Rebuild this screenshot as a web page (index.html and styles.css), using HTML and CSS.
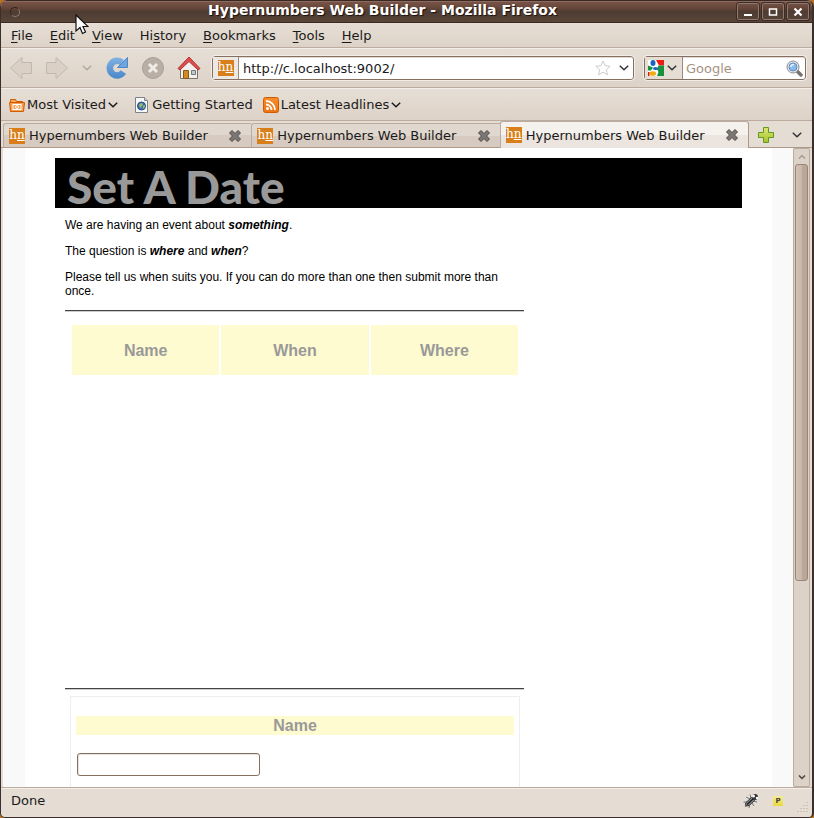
FILE: index.html
```html
<!DOCTYPE html>
<html lang="en">
<head>
<meta charset="utf-8">
<title>Hypernumbers Web Builder - Mozilla Firefox</title>
<link rel="stylesheet" href="styles.css">
</head>
<body>
<svg class="defs" aria-hidden="true">
  <defs>
    <linearGradient id="blue" x1="0" y1="0" x2="0" y2="24" gradientUnits="userSpaceOnUse"><stop offset="0" stop-color="#85b4e4"/><stop offset="1" stop-color="#4585c8"/></linearGradient>
    <linearGradient id="orange" x1="0" y1="0" x2="0" y2="1"><stop offset="0" stop-color="#f98c2c"/><stop offset="1" stop-color="#ee7410"/></linearGradient>
    <linearGradient id="green" x1="0" y1="0" x2="0" y2="1"><stop offset="0" stop-color="#dde873"/><stop offset="1" stop-color="#a3c02e"/></linearGradient>
    <symbol id="chevron" viewBox="0 0 10 6"><path d="M.8 .8L5 4.800 9.200.8" fill="none" stroke="currentColor" stroke-width="1.500"/></symbol>
    <symbol id="cross" viewBox="0 0 14 14"><path d="M4 1.5l3 3 3-3L12.500 4l-3 3 3 3-2.500 2.500-3-3-3 3L1.500 10l3-3-3-3z" fill="#7a7775" stroke="#4b4946" stroke-linejoin="round"/></symbol>
  </defs>
</svg>
<div class="window">
  <header class="titlebar">
    <button class="window-menu" type="button" aria-label="Window menu"></button>
    <div class="window-title">Hypernumbers Web Builder - Mozilla Firefox</div>
    <div class="window-buttons">
      <button type="button" aria-label="Minimize"><svg width="10" height="10"><path d="M1 7h8v2H1z" fill="#fff"/></svg></button>
      <button type="button" aria-label="Maximize"><svg width="10" height="10"><path d="M1.500 2h7v6h-7z" fill="none" stroke="#fff" stroke-width="1.500"/></svg></button>
      <button type="button" aria-label="Close"><svg width="10" height="10"><path d="M1.500 1.500l7 7M8.500 1.500l-7 7" stroke="#fff" stroke-width="2.200"/></svg></button>
    </div>
  </header>

  <nav class="menubar" aria-label="Menu bar">
    <button type="button"><u>F</u>ile</button>
    <button type="button"><u>E</u>dit</button>
    <button type="button"><u>V</u>iew</button>
    <button type="button">Hi<u>s</u>tory</button>
    <button type="button"><u>B</u>ookmarks</button>
    <button type="button"><u>T</u>ools</button>
    <button type="button"><u>H</u>elp</button>
  </nav>

  <div class="toolbar">
    <div class="nav-buttons">
      <button type="button" aria-label="Back" disabled><svg width="24" height="24"><path d="M1.500 12L13 1.500v5h9.500v11H13v5z" fill="#dad0c6" stroke="#c3b8ac" stroke-linejoin="round"/></svg></button>
      <button type="button" aria-label="Forward" disabled><svg width="24" height="24"><path d="M22.500 12L11 1.500v5H1.500v11H11v5z" fill="#dad0c6" stroke="#c3b8ac" stroke-linejoin="round"/></svg></button>
      <button type="button" class="history" aria-label="Recent pages" disabled><svg width="10" height="6"><use href="#chevron"/></svg></button>
      <button type="button" aria-label="Reload"><svg width="24" height="24"><path d="M16.800 6.500A7.300 7.300 0 1 0 18.300 16" fill="none" stroke="url(#blue)" stroke-width="6.500"/><path d="M22.500 1.500V11.500H12.500z" fill="#6ea5dc" stroke="#4a88cb" stroke-linejoin="round"/></svg></button>
      <button type="button" aria-label="Stop" disabled><svg width="24" height="24"><circle cx="12" cy="12" r="10.500" fill="#b9afa7" stroke="#aaa098"/><path d="M8 8l8 8M16 8l-8 8" stroke="#f0ebe6" stroke-width="3"/></svg></button>
      <button type="button" aria-label="Home"><svg width="24" height="24"><path d="M3.500 11L12 4l8.500 7v11.500h-17z" fill="#f2f1ef" stroke="#77726c"/><path d="M6.500 14.500h5v8h-5z" fill="#d08b20" stroke="#855a14"/><path d="M14.500 14.500h4v4h-4z" fill="#bccbd9" stroke="#777"/><path d="M1 12.500L12 1l11 11.500-2 1.500-9-8.500L3 14z" fill="#d95050" stroke="#b83030" stroke-linejoin="round"/></svg></button>
    </div>
    <form class="address">
      <span class="identity"><span class="hn">h<u>n</u></span></span>
      <input type="text" aria-label="Address" value="http://c.localhost:9002/">
      <button type="button" class="star" aria-label="Bookmark this page"><svg width="16" height="16"><path d="M8 1l2.100 4.700 5 .6-3.700 3.400 1 5.100L8 12.200l-4.400 2.600 1-5.100L.900 6.300l5-.6z" fill="#fff" stroke="#ccc"/></svg></button>
      <button type="button" aria-label="Address history"><svg width="10" height="6"><use href="#chevron"/></svg></button>
    </form>
    <form class="search">
      <button type="button" class="engine" aria-label="Search engine">
        <svg width="16" height="16"><path fill="#fff" d="M0 0h16v16H0z"/><path d="M8 0h8v5.500h-5z" fill="#ed1c12"/><path d="M10.500 5.500H16V16H9l1.500-4-1.500-3z" fill="#16923e"/><path d="M0 5.500l5 2-2 3H0z" fill="#16923e"/><path d="M0 12h1.500v4H0z" fill="#e01010"/><ellipse cx="5" cy="3" rx="2.500" ry="3" fill="#1764c2"/><ellipse cx="7.500" cy="8.500" rx="2.500" ry="1.500" fill="#1764c2"/><ellipse cx="4.800" cy="13.500" rx="3.300" ry="2.300" fill="#f0ac13"/></svg>
        <svg width="10" height="6"><use href="#chevron"/></svg>
      </button>
      <input type="text" aria-label="Search" placeholder="Google">
      <button type="submit" aria-label="Go"><svg width="17" height="17"><path d="M11 11l4 4" stroke="#77736f" stroke-width="3.500" stroke-linecap="round"/><circle cx="7" cy="7" r="6" fill="#e5e7e9" stroke="#8c8c8c"/><circle cx="7" cy="7" r="4" fill="#8cb9eb" stroke="#5f8fc4"/><path d="M4.500 7Q5 4.500 8 4.500" fill="none" stroke="#e2f0ff" stroke-width="1.500"/></svg></button>
    </form>
  </div>

  <nav class="bookmarks" aria-label="Bookmarks">
    <button type="button" class="visited"><svg width="16" height="16"><path d="M1.500 13V2.500h5l1 2h6V7" fill="#f9a65a" stroke="#ce5c00"/><path d="M.500 5.500h15l-1 9h-13z" fill="#f8a155" stroke="#ce5c00"/><rect x="4" y="7.500" width="8" height="5" fill="none" stroke="#fff"/><circle cx="8" cy="10" r="1.500" fill="none" stroke="#fff"/></svg>Most Visited<svg width="10" height="6"><use href="#chevron"/></svg></button>
    <a href="#"><svg width="16" height="16"><path d="M1.500.5h9l3 3v12h-12z" fill="#f7f8f8" stroke="#7c8488"/><path d="M10.500.5v3h3" fill="#ddd" stroke="#7c8488"/><circle cx="7.500" cy="9" r="4" fill="#466fae" stroke="#274b80"/><path d="M5 8l2-2 2 1-1 2-2 2zM9 9l2-1v2l-2 2z" fill="#9abf65"/></svg>Getting Started</a>
    <button type="button"><svg width="16" height="16"><rect x=".5" y=".5" width="15" height="15" rx="2" fill="url(#orange)" stroke="#ce5c00"/><circle cx="4.500" cy="11.500" r="1.500" fill="#fff"/><path d="M3 7.500a5.500 5.500 0 0 1 5.500 5.500M3 4a9 9 0 0 1 9 9" fill="none" stroke="#fff" stroke-width="1.800"/></svg>Latest Headlines<svg width="10" height="6"><use href="#chevron"/></svg></button>
  </nav>

  <div class="tabstrip">
    <div class="tab"><span class="hn">h<u>n</u></span><span class="tab-label">Hypernumbers Web Builder</span><button type="button" aria-label="Close tab"><svg width="14" height="14"><use href="#cross"/></svg></button></div>
    <div class="tab"><span class="hn">h<u>n</u></span><span class="tab-label">Hypernumbers Web Builder</span><button type="button" aria-label="Close tab"><svg width="14" height="14"><use href="#cross"/></svg></button></div>
    <div class="tab active"><span class="hn">h<u>n</u></span><span class="tab-label">Hypernumbers Web Builder</span><button type="button" aria-label="Close tab"><svg width="14" height="14"><use href="#cross"/></svg></button></div>
    <div class="tab-tools">
      <button type="button" aria-label="New tab"><svg width="16" height="16"><path d="M5.500.5h5v5h5v5h-5v5h-5v-5h-5v-5h5z" fill="url(#green)" stroke="#5f9a1c"/></svg></button>
      <button type="button" aria-label="List all tabs"><svg width="10" height="6"><use href="#chevron"/></svg></button>
    </div>
  </div>

  <div class="viewport">
    <div class="canvas">
      <main class="page">
        <h1>Set A Date</h1>
        <div class="column">
          <p>We are having an event about <strong>something</strong>.</p>
          <p>The question is <strong>where</strong> and <strong>when</strong>?</p>
          <p>Please tell us when suits you. If you can do more than one then submit more than once.</p>
          <hr>
          <div class="replies">
            <table>
              <thead><tr><th>Name</th><th>When</th><th>Where</th></tr></thead>
            </table>
          </div>
          <hr>
          <form class="entry">
            <label for="name">Name</label>
            <input id="name" type="text">
          </form>
        </div>
      </main>
    </div>
    <div class="scrollbar">
      <button type="button" class="up" aria-label="Scroll up"><svg width="8" height="5"><path d="M1 4.500l3-3 3 3" fill="none" stroke="#a99b90" stroke-width="1.500"/></svg></button>
      <div class="track"><div class="thumb"></div></div>
      <button type="button" aria-label="Scroll down"><svg width="8" height="5"><path d="M1 .5l3 3 3-3" fill="none" stroke="#4a443c" stroke-width="1.500"/></svg></button>
    </div>
  </div>

  <footer class="statusbar">
    <span class="status">Done</span>
    <svg width="16" height="16"><path d="M3 4l4 2M7 1.500l1 4M.5 9l4 0M6 15l1-4M11 13l-2-3M14 9l-4-1M2 14l2-3" stroke="#777" fill="none"/><path d="M3 13l-.5-3L8.500 4.500l3 3-5.500 5z" fill="#8a9095" stroke="#333"/><path d="M4 11.500l6-5.500" stroke="#1c1c1c" stroke-width="1.500"/><circle cx="12" cy="4" r="3" fill="#333"/><circle cx="10.500" cy="3" r="1.500" fill="#fff"/><circle cx="14" cy="5" r="1.200" fill="#fff"/></svg>
    <span class="badge">P</span>
    <svg class="grip" width="12" height="12"><path d="M10 1v1M7 4v1M10 4v1M4 7v1M7 7v1M10 7v1M1 10v1M4 10v1M7 10v1M10 10v1" stroke="#b5a697" stroke-width="1"/></svg>
  </footer>
</div>
<svg class="pointer" width="14" height="22" aria-hidden="true"><path d="M1 1v16l4-3.500 2.500 6 3-1.500-2.500-5.500h5z" fill="#fff" stroke="#111" stroke-width="1.200"/></svg>
</body>
</html>
```
FILE: styles.css
```css
* { box-sizing: border-box; }
body {
  margin: 0;
  background: #b9701f;
  font-family: "DejaVu Sans", sans-serif;
  font-size: 13px;
  color: #1a1a1a;
}
button, input { font: inherit; color: inherit; margin: 0; }
button { padding: 0; border: 0; background: none; }
svg { flex: none; display: block; }
.defs { position: absolute; width: 0; height: 0; }

.window {
  display: flex;
  flex-direction: column;
  height: 100vh;
  overflow: hidden;
  border: 1px solid #3a2f2a;
  border-right-width: 2px;
  border-top: 0;
  border-radius: 7px 7px 5px 5px;
  background: #e5dcd3;
}

.titlebar {
  display: flex;
  align-items: center;
  flex: none;
  height: 23px;
  padding: 0 3px 0 9px;
  border-top: 1px solid #3a2822;
  border-bottom: 1px solid #3a2a22;
  background: linear-gradient(#7a5649, #664539 35%, #4e3b32 50%, #594639);
  box-shadow: inset 0 1px #8c6a5e;
}
.window-menu {
  width: 10px;
  height: 10px;
  border: 1px solid #332620;
  border-right-color: #8d7b71;
  border-bottom-color: #8d7b71;
  border-radius: 50%;
}
.window-title {
  flex: 1;
  padding-right: 8px;
  padding-left: 16px;
  text-align: center;
  font-size: 14px;
  font-weight: bold;
  line-height: 19px;
  padding-bottom: 2px;
  color: #fff;
  text-shadow: 1px 1px 1px #1a0f0a;
}
.window-buttons { display: flex; gap: 3px; }
.window-buttons button {
  display: grid;
  place-items: center;
  width: 22px;
  height: 17px;
  border: 1px solid #8e7a70;
  outline: 1px solid #3b2b24;
  border-radius: 2px;
}

.menubar {
  display: flex;
  align-items: center;
  flex: none;
  gap: 17px;
  height: 25px;
  padding: 0 10px;
  border-bottom: 1px solid #bcab9f;
  background: linear-gradient(#e6ded5, #ddd2c8);
}
u { text-underline-offset: 2px; }

.toolbar {
  display: flex;
  align-items: center;
  flex: none;
  gap: 10px;
  height: 40px;
  padding: 0 6px 0 8px;
  border-top: 1px solid #f3eee9;
  border-bottom: 1px solid #bcab9f;
  background: linear-gradient(#e6ded5, #ddd2c8);
}
.nav-buttons { display: flex; align-items: center; gap: 12px; padding-right: 1px; }
.nav-buttons .history { margin: 0 1px; color: #b3a797; }
.address, .search {
  display: flex;
  align-items: center;
  height: 24px;
  border: 1px solid #85705f;
  border-radius: 3px;
  outline: 1px solid #f3eee9;
  background: #fff;
  box-shadow: inset 0 1px #e2dad6;
  color: #333;
}
.address { flex: 1; gap: 8px; padding-right: 4px; }
.identity {
  display: grid;
  place-items: center;
  width: 26px;
  height: 22px;
  border-right: 1px solid #9c8b7e;
  background: #ede8e3;
}
.address input, .search input {
  flex: 1;
  min-width: 0;
  padding: 0;
  border: 0;
  background: none;
  color: #1a1a1a;
}
.address input { margin-left: -4px; }
.search { gap: 3px; width: 162px; padding-right: 2px; }
.search input::placeholder { color: #a79382; opacity: 1; }
.engine {
  display: flex;
  align-items: center;
  gap: 3px;
  height: 22px;
  padding: 0 5px 0 3px;
  border-right: 1px solid #9c8b7e;
  background: #e6ded5;
}

.hn {
  flex: none;
  width: 16px;
  height: 16px;
  background: #d87f1c;
  color: #fff;
  font: 12px/15px "DejaVu Serif", serif;
  text-align: center;
}
.hn u { text-underline-offset: 1px; }

.bookmarks {
  display: flex;
  align-items: center;
  flex: none;
  gap: 10px;
  height: 33px;
  padding: 0 8px;
  border-top: 1px solid #f3eee9;
  border-bottom: 1px solid #bcab9f;
  background: linear-gradient(#e6ded5, #ddd2c8);
}
.bookmarks > * {
  display: flex;
  align-items: center;
  gap: 2px;
  color: #1a1a1a;
  text-decoration: none;
}
.bookmarks .visited { margin-right: 6px; }

.tabstrip {
  display: flex;
  align-items: flex-end;
  flex: none;
  height: 27px;
  padding-left: 2px;
  background: #e5dcd3;
  box-shadow: inset 0 -1px #ad9989;
}
.tab {
  display: flex;
  align-items: center;
  flex: 1;
  gap: 4px;
  min-width: 0;
  height: 25px;
  padding: 0 9px 0 5px;
  border: 1px solid #bcab9f;
  border-right: 0;
  border-bottom-color: #ad9989;
  border-radius: 3px 0 0 0;
  background: linear-gradient(#e0d7ce 50%, #d7cbc1 50%);
}
.tab-label { flex: 1; white-space: nowrap; overflow: hidden; }
.tab.active {
  height: 27px;
  border-right: 1px solid #ad9989;
  border-bottom: 0;
  border-radius: 3px 3px 0 0;
  background: linear-gradient(#f5f1ed 50%, #ece5df 50%);
}
.tab-tools {
  display: flex;
  align-items: center;
  gap: 18px;
  height: 27px;
  padding: 0 10px 0 9px;
  color: #333;
}

.viewport {
  display: flex;
  flex: 1;
  min-height: 0;
  margin: 0 1px;
  border: solid #ead9cf;
  border-width: 0 1px;
}
.canvas { flex: 1; overflow: hidden; padding: 0 21px 0 22px; background: #f9f9f9; }
.page {
  height: 100%;
  padding: 10px 30px 0;
  background: #fff;
  font-family: "Liberation Sans", sans-serif;
  font-size: 12px;
  line-height: 14px;
  color: #000;
}
h1 {
  height: 50px;
  margin: 0;
  padding: 4px 12px 0;
  background: #000;
  color: #999;
  font: 900 46px/50px Lato, sans-serif;
  white-space: nowrap;
}
.column { max-width: 469px; padding: 10px 0 0 10px; }
p { margin: 0 0 12px; }
strong { font-style: italic; }
hr { height: 2px; margin: 0; border: solid; border-color: #444 transparent #ccc; border-width: 1px 0; }
.replies { min-height: 376px; padding: 11px 4px 0 5px; }
table { width: 100%; border-spacing: 2px; table-layout: fixed; }
th {
  height: 50px;
  padding: 2px 0 0;
  background: #fffbd0;
  color: #999;
  font-size: 16px;
}
.entry {
  height: 200px;
  margin: 6px 4px 0 5px;
  padding: 19px 5px 0;
  border: 1px solid #eee;
}
.entry label {
  display: block;
  background: #fffbd0;
  color: #999;
  font-size: 16px;
  font-weight: bold;
  line-height: 19px;
  text-align: center;
}
.entry input {
  width: 183px;
  height: 23px;
  margin: 18px 1px;
  border: 1px solid #85705f;
  border-radius: 3px;
  box-shadow: inset 1px 1px #e8e2de;
}

.scrollbar {
  display: flex;
  flex-direction: column;
  width: 17px;
  border: 1px solid #bcab9f;
  border-radius: 2px;
  background: #ddd2c8;
}
.scrollbar button { display: grid; place-items: center; height: 15px; }
.scrollbar button:last-child { height: 18px; }
.track { flex: 1; padding: 0 1px; }
.thumb {
  height: 69%;
  border: 1px solid #9a8576;
  border-radius: 3px;
  background: linear-gradient(90deg, #d2c3b7, #c9b8ab 50%, #bba898 50%, #b9a697);
}

.statusbar {
  display: flex;
  align-items: center;
  flex: none;
  gap: 14px;
  height: 30px;
  padding: 0 3px 4px 10px;
  border-top: 1px solid #bcab9f;
  box-shadow: inset 0 1px #f3eee9;
}
.status { flex: 1; }
.badge {
  width: 10px;
  height: 10px;
  background: linear-gradient(#f5ec94, #ead93c);
  color: #444;
  font-size: 7px;
  font-weight: bold;
  line-height: 10px;
  text-align: center;
}
.grip { align-self: flex-end; }
.pointer { position: absolute; left: 75px; top: 14px; }
```
